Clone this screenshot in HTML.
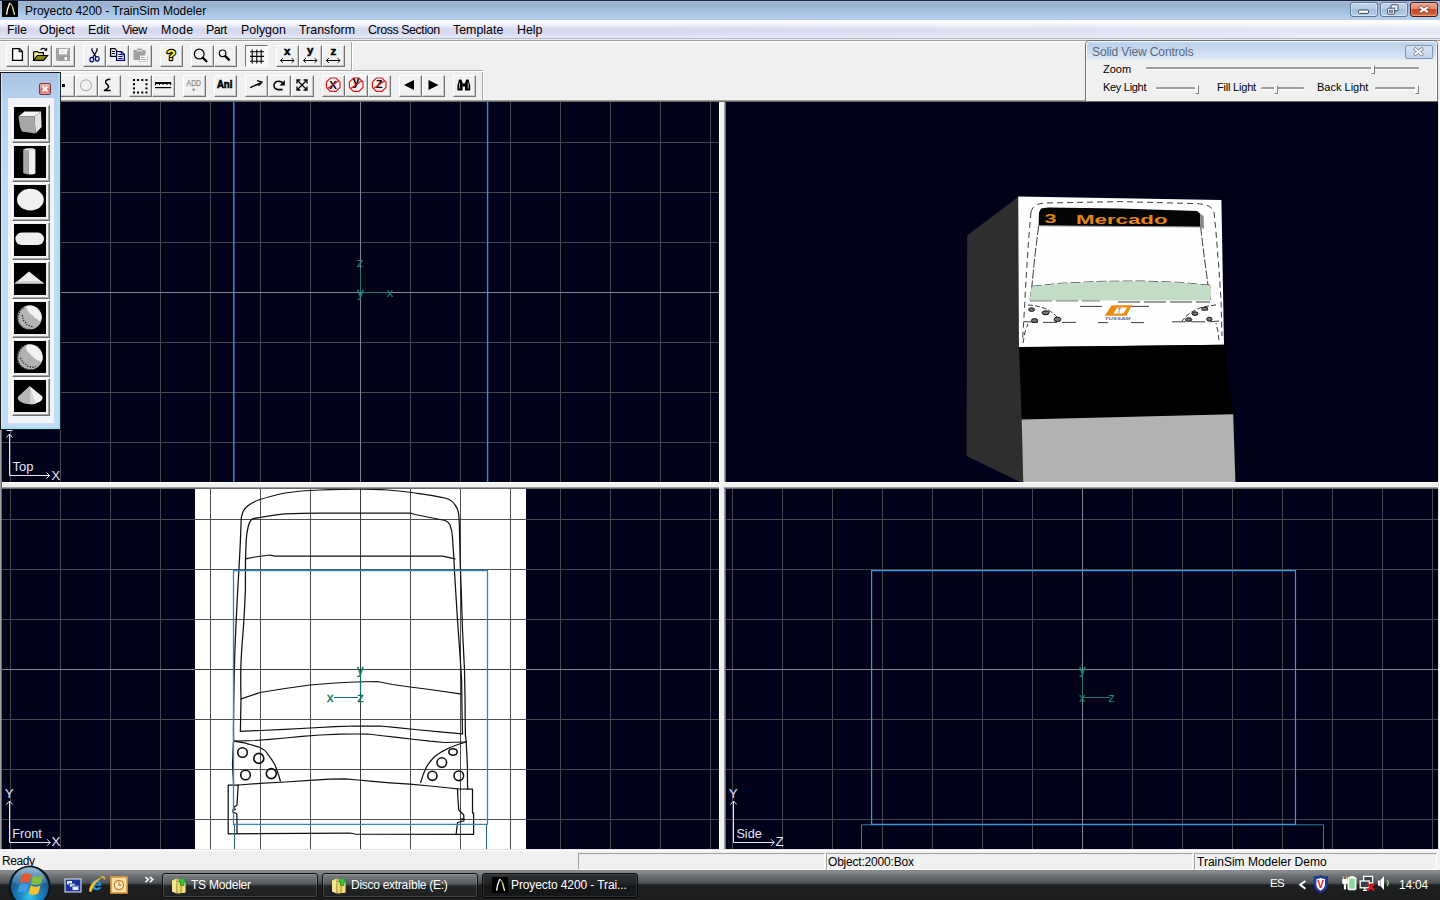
<!DOCTYPE html>
<html lang="es">
<head>
<meta charset="utf-8">
<title>Proyecto 4200 - TrainSim Modeler</title>
<style>
html,body{margin:0;padding:0;}
body{width:1440px;height:900px;overflow:hidden;position:relative;background:#f0f0f0;font-family:"Liberation Sans",sans-serif;font-size:12px;color:#000;}
.abs{position:absolute;}
#title{left:0;top:0;width:1440px;height:20px;background:linear-gradient(#1c2c48 0,#1c2c48 1px,#a9b9d1 1px,#a9b9d1 2px,#9cb2cf 2px,#9cb4d2 6px,#a4c0e0 11px,#b2ceee 17px,#b9cde6 20px);}
#title .txt{left:25px;top:3px;letter-spacing:-0.03px;font-size:12px;line-height:16px;white-space:nowrap;color:#000;}
#menu{left:0;top:20px;width:1440px;height:18px;background:linear-gradient(#ffffff 0,#fbfcff 3px,#e6eaf8 6px,#d5d9ed 9px,#d9dbf2 13px,#e4e8f5 18px);}
#menu span{position:absolute;top:2px;font-size:12.4px;line-height:16px;white-space:nowrap;}
#menuline{left:0;top:38px;width:1440px;height:4px;background:linear-gradient(#b6bac2 0,#b6bac2 1px,#e9edf2 1px,#e9edf2 2px,#9a9ea2 2px,#9a9ea2 3px,#fff 3px,#fff 4px);}
.tb{position:absolute;width:23px;height:22px;box-sizing:border-box;background:#f1f1f1;box-shadow:inset -1px -1px 0 #c9c9c9;border-left:1px solid #fff;border-top:1px solid #fff;border-right:1px solid #737373;border-bottom:1px solid #737373;}
.tb svg{position:absolute;left:-1px;top:-1px;}
.tb.down{box-shadow:none;border-left:1px solid #737373;border-top:1px solid #737373;border-right:1px solid #fff;border-bottom:1px solid #fff;background:#f7f7f7;}
.wbtn{box-sizing:border-box;border:1px solid #5f7896;border-radius:3px;background:linear-gradient(#c3d6ec 0,#b4cbe6 45%,#a3bedd 50%,#b4cdea 100%);box-shadow:inset 0 0 0 1px rgba(255,255,255,.45);}
.lbl{font-size:11px;line-height:13px;white-space:nowrap;color:#000;}
.trk{height:2px;background:#9c9c9c;border-bottom:1px solid #fff;border-radius:1px;}
.thm{width:4px;height:9px;box-sizing:border-box;background:#f4f4f4;border-left:1px solid #fff;border-top:1px solid #fff;border-right:1px solid #808080;border-bottom:1px solid #808080;}
.grid{background-image:linear-gradient(90deg,#46464f 0,#46464f 1px,transparent 1px),linear-gradient(#46464f 0,#46464f 1px,transparent 1px);background-size:50px 50px,50px 50px;background-repeat:repeat;}
svg text{font-family:"Liberation Sans",sans-serif;}
.pane{height:17px;box-sizing:border-box;border-left:1px solid #a0a0a0;border-top:1px solid #a0a0a0;border-right:1px solid #fff;border-bottom:1px solid #fff;}
.pane span{position:absolute;left:2px;top:1px;font-size:12px;line-height:15px;white-space:nowrap;}
.tbtn{height:25px;box-sizing:border-box;border:1px solid #0e0f10;border-radius:3px;background:linear-gradient(#7d8184 0,#6a6e71 5px,#54585a 10px,#3d4042 11px,#222426 12px,#1e2022 25px);box-shadow:inset 0 0 0 1px rgba(255,255,255,.16);}
.tbtn span{position:absolute;top:4px;font-size:12px;line-height:15px;color:#fff;white-space:nowrap;}
.tbtn.act{background:linear-gradient(#2e3032 0,#222426 10px,#141516 12px,#18191a 25px);border-color:#08090a;box-shadow:inset 0 0 0 1px rgba(255,255,255,.10);}
.tray{font-size:11.5px;line-height:14px;color:#fff;white-space:nowrap;}
.pb{position:absolute;left:11px;width:38px;height:38px;box-sizing:border-box;background:#f0f0f0;border-left:1px solid #fff;border-top:1px solid #fff;border-right:1px solid #707070;border-bottom:1px solid #707070;box-shadow:inset -1px -1px 0 #a6a6a6;}
.pb svg{position:absolute;left:1px;top:1px;background:#000;}
.vp{position:absolute;background-color:#010119;overflow:hidden;}
</style>
</head>
<body>
<div id="title" class="abs">
  <div class="abs txt">Proyecto 4200 - TrainSim Modeler</div>
</div>
<div id="menu" class="abs">
  <span style="left:7px">File</span><span style="left:39px">Object</span><span style="left:88px">Edit</span><span style="left:122px;letter-spacing:-0.5px">View</span><span style="left:161px;letter-spacing:0.4px">Mode</span><span style="left:206px;letter-spacing:-0.5px">Part</span><span style="left:241px">Polygon</span><span style="left:299px">Transform</span><span style="left:368px;letter-spacing:-0.42px">Cross Section</span><span style="left:453px">Template</span><span style="left:517px">Help</span>
</div>
<div class="abs" style="left:0;top:20px;width:1440px;height:18px;background:linear-gradient(90deg,rgba(255,255,255,0) 45%,rgba(255,255,255,.4) 100%);"></div>
<div id="menuline" class="abs"></div>

<!-- TOOLBARS -->
<div id="toolbars">
<!-- toolbar frame lines -->
<div class="abs" style="left:0;top:70px;width:483px;height:1px;background:#a8a8a8"></div>
<div class="abs" style="left:0;top:71px;width:484px;height:1px;background:#fff"></div>
<div class="abs" style="left:351px;top:42px;width:1px;height:29px;background:#a8a8a8"></div>
<div class="abs" style="left:352px;top:42px;width:1px;height:29px;background:#fff"></div>
<div class="abs" style="left:482px;top:72px;width:1px;height:28px;background:#a8a8a8"></div>
<div class="abs" style="left:483px;top:72px;width:1px;height:28px;background:#fff"></div>
<!-- ROW 1 -->
<div class="tb" style="left:6px;top:45px"><svg width="23" height="22" viewBox="0 0 23 22"><path d="M6.6 3.6H13.4L16.4 6.6V15.4H6.6Z" fill="#fff" stroke="#000" stroke-width="1.3"/><path d="M13.2 3.8V6.8H16.2" fill="none" stroke="#000" stroke-width="1.1"/></svg></div>
<div class="tb" style="left:29px;top:45px"><svg width="23" height="22" viewBox="0 0 23 22"><path d="M4.6 15.4V7.6L5.6 6.6H8.6L9.6 7.6H14.4V10" fill="#f2f284" stroke="#000" stroke-width="1.2"/><path d="M4.6 15.4L8.4 10.5H18.6L14.6 15.4Z" fill="#8a8a12" stroke="#000" stroke-width="1.2"/><path d="M11.5 4.8C13 2.8 16 2.8 17.4 5.6" fill="none" stroke="#000" stroke-width="1.1"/><path d="M15 5.6H18.2V2.8Z" fill="#000"/></svg></div>
<div class="tb" style="left:52px;top:45px"><svg width="23" height="22" viewBox="0 0 23 22"><path d="M4 3H18V16H5L4 15Z" fill="#a2a2a2"/><rect x="7" y="4" width="8" height="5.4" fill="#f6f6f6"/><path d="M8.4 5.6H12M8.4 7.4H13" stroke="#dadada" stroke-width=".8"/><rect x="14.6" y="3.6" width="1.4" height="2" fill="#fff"/><rect x="6.5" y="11" width="9" height="5" fill="#9a9a9a"/><rect x="12.6" y="12" width="2.4" height="3.2" fill="#fff"/></svg></div>

<div class="tb" style="left:83px;top:45px"><svg width="23" height="22" viewBox="0 0 23 22"><path d="M9 3.2V5.6L13.4 12.5M14 3.2V5.6L9.8 12.5" fill="none" stroke="#000018" stroke-width="1.3"/><ellipse cx="8.8" cy="14.6" rx="1.9" ry="2.3" fill="none" stroke="#00007c" stroke-width="1.2"/><ellipse cx="14.2" cy="13.8" rx="1.9" ry="2.3" fill="none" stroke="#00007c" stroke-width="1.2"/></svg></div>
<div class="tb" style="left:106px;top:45px"><svg width="23" height="22" viewBox="0 0 23 22"><path d="M4.6 3.6H8.8L10.6 5.4V11.4H4.6Z" fill="#fff" stroke="#000" stroke-width="1.3"/><path d="M6 6.5H9M6 8.5H9" stroke="#000" stroke-width="1"/><path d="M10.6 6.6H15.4L18.4 9.6V15.4H10.6Z" fill="#fff" stroke="#00006e" stroke-width="1.3"/><path d="M15.2 6.8V9.8H18.2" fill="none" stroke="#00006e" stroke-width="1"/><path d="M12.4 9.5H15M12.4 11.5H16.6M12.4 13.5H16.6" stroke="#00006e" stroke-width="1"/></svg></div>
<div class="tb" style="left:129px;top:45px"><svg width="23" height="22" viewBox="0 0 23 22"><path d="M4.5 5H8V3.6H13V5H16.5V10H18.5V16.5H10.5V15H4.5Z" fill="#a0a0a0"/><rect x="7.5" y="5.3" width="6" height="1.2" fill="#e8e8e8"/><rect x="11" y="10.6" width="7" height="5.4" fill="#f4f4f4"/><path d="M12 12.5H15.5M12 14.5H17" stroke="#a8a8a8" stroke-width="1"/><rect x="16.3" y="9.6" width="2" height="2" fill="#fff"/></svg></div>

<div class="tb" style="left:160px;top:45px"><svg width="23" height="22" viewBox="0 0 23 22"><text x="11.2" y="15.4" text-anchor="middle" font-family="Liberation Sans,sans-serif" font-weight="bold" font-size="15.5" fill="#f6f62c" stroke="#000" stroke-width="2.3" stroke-linejoin="round" paint-order="stroke">?</text></svg></div>

<div class="tb" style="left:191px;top:45px"><svg width="23" height="22" viewBox="0 0 23 22"><circle cx="8.2" cy="9" r="4.9" fill="none" stroke="#000" stroke-width="1.2"/><path d="M11.6 12.6L16.2 17" stroke="#000" stroke-width="2.2"/></svg></div>
<div class="tb" style="left:214px;top:45px"><svg width="23" height="22" viewBox="0 0 23 22"><circle cx="8.6" cy="8.3" r="3.3" fill="none" stroke="#000" stroke-width="1.2"/><path d="M10.8 10.6L15.6 15.4" stroke="#000" stroke-width="2.2"/></svg></div>

<div class="tb down" style="left:245px;top:45px"><svg width="23" height="22" viewBox="0 0 23 22"><path d="M7.2 4.6V18.4M11.8 4.6V18.4M16.2 4.6V18.4M5 6.8H19M5 11.4H19M5 16.2H19" stroke="#000" stroke-width="1.1" fill="none"/></svg></div>

<div class="tb" style="left:276px;top:45px"><svg width="23" height="22" viewBox="0 0 23 22"><text x="11.3" y="9.6" text-anchor="middle" font-family="Liberation Mono,monospace" font-weight="bold" font-size="11.5" fill="#000" stroke="#000" stroke-width=".5">x</text><path d="M4.5 15.5H18" stroke="#000" stroke-width="1"/><path d="M6.8 13.2L4.5 15.5L6.8 17.8M15.7 13.2L18 15.5L15.7 17.8" fill="none" stroke="#000" stroke-width="1"/></svg></div>
<div class="tb" style="left:299px;top:45px"><svg width="23" height="22" viewBox="0 0 23 22"><text x="11.3" y="9.2" text-anchor="middle" font-family="Liberation Mono,monospace" font-weight="bold" font-size="11.5" fill="#000" stroke="#000" stroke-width=".5">y</text><path d="M4.5 15.5H18" stroke="#000" stroke-width="1"/><path d="M6.8 13.2L4.5 15.5L6.8 17.8M15.7 13.2L18 15.5L15.7 17.8" fill="none" stroke="#000" stroke-width="1"/></svg></div>
<div class="tb" style="left:322px;top:45px"><svg width="23" height="22" viewBox="0 0 23 22"><text x="11.3" y="9.6" text-anchor="middle" font-family="Liberation Mono,monospace" font-weight="bold" font-size="11.5" fill="#000" stroke="#000" stroke-width=".5">z</text><path d="M4.5 15.5H18" stroke="#000" stroke-width="1"/><path d="M6.8 13.2L4.5 15.5L6.8 17.8M15.7 13.2L18 15.5L15.7 17.8" fill="none" stroke="#000" stroke-width="1"/></svg></div>

<!-- ROW 2 -->
<div class="tb" style="left:6px;top:75px"></div>
<div class="tb" style="left:29px;top:75px"></div>
<div class="tb" style="left:52px;top:75px"><svg width="23" height="22" viewBox="0 0 23 22"><rect x="10" y="9" width="3" height="3" fill="#000"/></svg></div>
<div class="tb" style="left:75px;top:75px"><svg width="23" height="22" viewBox="0 0 23 22"><circle cx="11" cy="10.3" r="5.5" fill="none" stroke="#9a9a9a" stroke-width="0.9"/></svg></div>
<div class="tb" style="left:98px;top:75px"><svg width="23" height="22" viewBox="0 0 23 22"><path d="M12.4 4.4C9.6 4 7.2 5.4 7.6 7.4C8 9.2 10.6 9.6 10.6 11.6C10.6 13.2 8.6 14.4 6 15.6H12.6" fill="none" stroke="#000" stroke-width="1.5"/></svg></div>

<div class="tb" style="left:129px;top:75px"><svg width="23" height="22" viewBox="0 0 23 22" fill="#000"><rect x="4" y="4" width="2" height="2"/><rect x="8" y="4" width="2" height="2"/><rect x="12.3" y="4" width="2" height="2"/><rect x="16.5" y="4" width="2" height="2"/><rect x="4" y="8.2" width="2" height="2"/><rect x="16.5" y="8.2" width="2" height="2"/><rect x="4" y="12.4" width="2" height="2"/><rect x="16.5" y="12.4" width="2" height="2"/><rect x="4" y="16.5" width="2" height="2"/><rect x="8" y="16.5" width="2" height="2"/><rect x="12.3" y="16.5" width="2" height="2"/><rect x="16.5" y="16.5" width="2" height="2"/></svg></div>
<div class="tb" style="left:152px;top:75px"><svg width="23" height="22" viewBox="0 0 23 22"><path d="M3 8H19.2" stroke="#000" stroke-width="2"/><path d="M3.5 8V10.4M7.5 8V10M11.2 8V10M15 8V10M18.7 8V10.4" stroke="#000" stroke-width="1"/><path d="M3 12.6H19.2" stroke="#000" stroke-width="1.2"/></svg></div>

<div class="tb" style="left:183px;top:75px"><svg width="23" height="22" viewBox="0 0 23 22"><text x="10.8" y="11" text-anchor="middle" font-family="Liberation Mono,monospace" font-size="8.6" fill="#8e8e8e" stroke="#8e8e8e" stroke-width=".25" textLength="14.4" lengthAdjust="spacingAndGlyphs">ADD</text><rect x="9.6" y="13.6" width="2.2" height="2.2" fill="#909090"/></svg></div>

<div class="tb" style="left:214px;top:75px"><svg width="23" height="22" viewBox="0 0 23 22"><text x="10.6" y="13" text-anchor="middle" font-family="Liberation Sans,sans-serif" font-weight="bold" font-size="10" fill="#000" stroke="#000" stroke-width="0.6" textLength="15.4" lengthAdjust="spacingAndGlyphs">Ani</text></svg></div>

<div class="tb" style="left:245px;top:75px"><svg width="23" height="22" viewBox="0 0 23 22"><path d="M5.2 12.6L15.6 8" stroke="#000" stroke-width="1.5"/><path d="M12 5.6L17 7L13.6 10.8" fill="none" stroke="#000" stroke-width="1.3"/></svg></div>
<div class="tb" style="left:268px;top:75px"><svg width="23" height="22" viewBox="0 0 23 22"><path d="M14.6 14.6H10.2C7.4 14.6 6 12.4 6 10.6C6 8 8 6.2 10.6 6.2C12.6 6.2 14.4 7 15.4 8.8" fill="none" stroke="#000" stroke-width="1.6"/><path d="M16.8 5V10.4H11.6Z" fill="#000"/></svg></div>
<div class="tb" style="left:291px;top:75px"><svg width="23" height="22" viewBox="0 0 23 22"><path d="M6.5 5.5L15.5 14.5M15.5 5.5L6.5 14.5" stroke="#000" stroke-width="1.2"/><path d="M6 8.4V5H9.4M12.6 5H16V8.4M16 11.6V15H12.6M9.4 15H6V11.6" fill="none" stroke="#000" stroke-width="1.3"/></svg></div>

<div class="tb" style="left:322px;top:75px"><svg width="23" height="22" viewBox="0 0 23 22"><text x="11.2" y="13.6" text-anchor="middle" font-family="Liberation Sans,sans-serif" font-weight="bold" font-size="11.5" fill="#000">X</text><path d="M8.4 3H14L18 7V12.4L14 16.4H8.4L4.4 12.4V7Z" fill="none" stroke="#e01a1a" stroke-width="1.15"/><path d="M5.6 13.6L16.8 5.8" stroke="#e01a1a" stroke-width="1.2"/></svg></div>
<div class="tb" style="left:345px;top:75px"><svg width="23" height="22" viewBox="0 0 23 22"><text x="11.2" y="10.4" text-anchor="middle" font-family="Liberation Sans,sans-serif" font-weight="bold" font-size="13" fill="#000">y</text><path d="M8.4 3H14L18 7V12.4L14 16.4H8.4L4.4 12.4V7Z" fill="none" stroke="#e01a1a" stroke-width="1.15"/><path d="M5.6 13.6L16.8 5.8" stroke="#e01a1a" stroke-width="1.2"/></svg></div>
<div class="tb" style="left:368px;top:75px"><svg width="23" height="22" viewBox="0 0 23 22"><text x="11.2" y="13.4" text-anchor="middle" font-family="Liberation Sans,sans-serif" font-weight="bold" font-size="11" fill="#000">Z</text><path d="M8.4 3H14L18 7V12.4L14 16.4H8.4L4.4 12.4V7Z" fill="none" stroke="#e01a1a" stroke-width="1.15"/><path d="M5.6 13.6L16.8 5.8" stroke="#e01a1a" stroke-width="1.2"/></svg></div>

<div class="tb" style="left:399px;top:75px"><svg width="23" height="22" viewBox="0 0 23 22"><path d="M5 10L15 5V15Z" fill="#000"/></svg></div>
<div class="tb" style="left:422px;top:75px"><svg width="23" height="22" viewBox="0 0 23 22"><path d="M16.5 10L6.5 5V15Z" fill="#000"/></svg></div>
<div class="tb" style="left:453px;top:75px"><svg width="23" height="22" viewBox="0 0 23 22"><path d="M6 4.4H8.4L9.6 8V15.6H4.4V10.6ZM15.6 4.4H13.2L12 8V15.6H17.2V10.6Z" fill="#000"/><rect x="9.4" y="8.4" width="2.8" height="3.2" fill="#000"/><path d="M6.4 7.6V13.6M15.2 7.6V13.6" stroke="#fff" stroke-width="0.7"/></svg></div>
</div>


<!-- VIEWPORTS -->
<!-- sunken frame lines around view area -->
<div class="abs" style="left:0;top:100px;width:1440px;height:2px;background:linear-gradient(#a0a0a0 0,#a0a0a0 1px,#696969 1px,#696969 2px);"></div>
<div class="abs" style="left:0;top:100px;width:2px;height:750px;background:linear-gradient(90deg,#a0a0a0 0,#a0a0a0 1px,#696969 1px,#696969 2px);"></div>
<div class="abs" style="left:1438px;top:100px;width:2px;height:751px;background:linear-gradient(90deg,#e3e3e3 0,#e3e3e3 1px,#fff 1px,#fff 2px);"></div>
<div class="abs" style="left:0;top:849px;width:1440px;height:2px;background:linear-gradient(#e3e3e3 0,#e3e3e3 1px,#fff 1px,#fff 2px);"></div>
<!-- splitters -->
<div class="abs" style="left:719px;top:102px;width:7px;height:747px;background:linear-gradient(90deg,#fff 0,#fff 1px,#f0f0f0 1px,#f0f0f0 5px,#a0a0a0 5px,#a0a0a0 6px,#696969 6px);"></div>
<div class="abs" style="left:2px;top:482px;width:1436px;height:7px;background:linear-gradient(#fff 0,#fff 1px,#f0f0f0 1px,#f0f0f0 5px,#a0a0a0 5px,#a0a0a0 6px,#696969 6px);"></div>
<div class="abs" style="left:720px;top:483px;width:4px;height:6px;background:#f0f0f0;"></div><div class="abs" style="left:719px;top:483px;width:1px;height:6px;background:#fff;"></div>

<!-- TOP-LEFT (Top view) -->
<div id="vpTL" class="vp grid" style="left:2px;top:102px;width:717px;height:380px;background-position:8px 40px,8px 40px;">
<svg width="717" height="380" viewBox="2 102 717 380" style="position:absolute;left:0;top:0">
  <path d="M2 292.5H719M360.5 102V482" stroke="#85858f" stroke-width="1" fill="none"/>
  <path d="M233.8 102V482M487.6 102V482" stroke="#3590dc" stroke-width="1.4" fill="none"/>
  <g stroke="#1c7767" stroke-width="1" fill="none"><path d="M360.5 268V292M361 292.5H388"/></g>
  <g fill="#1f8572" font-size="13" text-anchor="middle" style="font-family:'Liberation Sans',sans-serif"><text x="360" y="267.2">z</text><text x="390" y="297.2">x</text><text x="360.4" y="296.6" stroke="#1f8572" stroke-width=".3">y</text></g>
  <g stroke="#e4e4fa" stroke-width="1" fill="none"><path d="M6.5 430.5H12.5"/><path d="M9.5 434V475.5H49.5"/><path d="M6.5 437.5L9.5 434L12.5 437.5M46.5 472.5L49.5 475.5L46.5 478.5"/></g>
  <text x="12.5" y="471" font-size="13" fill="#e4e4fa">Top</text>
  <text x="51.5" y="479.5" font-size="13" fill="#e4e4fa">X</text>
</svg>
</div>

<!-- TOP-RIGHT (3D view) -->
<div id="vpTR" class="vp" style="left:726px;top:102px;width:712px;height:380px;">
<svg width="712" height="380" viewBox="726 102 712 380" style="position:absolute;left:0;top:0">
  <path d="M967.2 235.5L1018.4 196.6L1023.2 482H1020L966.6 456Z" fill="#2e2e2e"/>
  <path d="M1018.2 196.5L1221.4 200L1224 344.8L1019 347.2Z" fill="#fefefe"/>
  <path d="M1019 347L1224 344.7L1233.2 414.2L1021.7 419.4Z" fill="#000"/>
  <path d="M1021.7 419.4L1233.2 414.2L1235.4 482H1023.2Z" fill="#b2b2b2"/>
  <!-- bus front texture -->
  <g fill="none" stroke="#1a1a1a" stroke-width="0.85" stroke-dasharray="6 4">
    <path d="M1031 212C1033 205 1038 203.4 1046 203L1120 201.6L1196 203.6C1206 204 1212 206 1214 212L1216 232L1219 270L1221 300L1222 336"/>
    <path d="M1031 212L1028.6 240L1026 280L1024.4 310L1022.6 340"/>
    <path d="M1038.6 226L1035 255L1032 285L1030 300" stroke-dasharray="9 2"/>
    <path d="M1200.6 226.6L1204 255L1208 285L1210.6 300" stroke-dasharray="9 2"/>
    <path d="M1031.6 286.4L1060 283.4L1100 281.4L1140 281L1180 282.4L1211 285.4" stroke-dasharray="10 3"/>
    <path d="M1030 300.8H1100M1118 302H1210" stroke-dasharray="22 4"/>
    <path d="M1080 306.4H1102M1126 306.4H1149M1098 322.6H1108M1131 322.6H1144" stroke-dasharray="none"/>
    <path d="M1024 321.6L1040 322.4H1076M1172 321.8H1210L1219 321" stroke-dasharray="14 5"/>
    <path d="M1028 305C1040 305.6 1052 309 1060 321M1216 305C1202 306 1190 310 1182 321" stroke-dasharray="5 2"/>
    <path d="M1023 343L1025 332L1028 324M1219 340L1217.6 330L1216 323" stroke-dasharray="5 3"/>
  </g>
  <path d="M1041 208.6L1048 207.6L1120 208.4L1197 211L1200 213.4L1200.6 227L1038.6 225.8L1039 212.6Z" fill="#050505"/>
  <path d="M1200 213.4L1203.6 216L1204 228.4L1200.6 227Z" fill="#8a8a8a"/>
  <path d="M1038.6 225.8L1200.6 227L1204 228.4" stroke="#9a9a9a" stroke-width="1" fill="none"/>
  <text x="1044.4" y="222.6" font-size="12.6" font-weight="bold" fill="#e2861c" textLength="12" lengthAdjust="spacingAndGlyphs">3</text>
  <text x="1076" y="224.4" font-size="13.4" font-weight="bold" fill="#e2861c" textLength="91.6" lengthAdjust="spacingAndGlyphs">Mercado</text>
  <path d="M1031.6 286.6L1060 283.6L1100 281.6L1140 281.2L1180 282.6L1211.4 285.6L1210.4 300.4H1029.6Z" fill="#c3dcc6"/>
  <!-- logo -->
  <path d="M1111.6 305.2H1132L1126.2 315.8H1104.8ZM1117.2 307.4L1113.4 313.6H1123.4L1127.2 307.4Z" fill="#ee8a10" fill-rule="evenodd"/>
  <text x="1117" y="312.8" font-size="6.6" font-style="italic" fill="#5a5a8a">T</text>
  <text x="1104.8" y="320.2" font-size="4.4" font-style="italic" font-weight="bold" fill="#6a6488" textLength="25.6" lengthAdjust="spacingAndGlyphs">TUSSAM</text>
  <!-- headlights -->
  <g fill="#777" stroke="#111" stroke-width="1"><ellipse cx="1031.6" cy="309.6" rx="3" ry="1.8"/><ellipse cx="1045.6" cy="312.8" rx="3.6" ry="2"/><ellipse cx="1034.6" cy="320.6" rx="3.2" ry="2"/><ellipse cx="1057.4" cy="319.4" rx="3.4" ry="2.2"/><ellipse cx="1195" cy="313.6" rx="3" ry="1.8"/><ellipse cx="1188.6" cy="319.6" rx="3.2" ry="1.8"/><ellipse cx="1209.4" cy="319.2" rx="2.6" ry="2"/><rect x="1202" y="307.6" width="5.4" height="2.6" stroke-width=".8"/></g>
</svg>
</div>

<!-- BOTTOM-LEFT (Front view) -->
<div id="vpBL" class="vp grid" style="left:2px;top:489px;width:717px;height:360px;background-position:8px 30px,8px 30px;">
<svg width="717" height="360" viewBox="2 489 717 360" style="position:absolute;left:0;top:0">
  <rect x="195" y="489" width="331" height="360" fill="#fff"/>
  <path d="M2 669.5H195M526 669.5H719" stroke="#85858f" stroke-width="1" fill="none"/>
  <g id="blgrid" stroke="#4e4e4e" stroke-width="1" fill="none"><path d="M210.5 489V849M260.5 489V849M310.5 489V849M410.5 489V849M460.5 489V849M510.5 489V849M195 519.5H526M195 569.5H526M195 619.5H526M195 719.5H526M195 769.5H526M195 819.5H526"/><path d="M360.5 489V849M195 669.5H526" stroke="#3c3c3c"/></g>
  <g id="bus" stroke="#101010" stroke-width="1.25" fill="none" stroke-linejoin="round" stroke-linecap="round">
    <!-- outer roof + sides -->
    <path d="M233.6 742C233.4 730 233.6 700 234.6 660C235.2 640 236.4 615 238 585C239.2 565 240.4 545 240.8 530L241.2 520C241.4 514 244 509 247.5 506C251 503 255 501.4 260 499.5C268 497 276 495 285 493C297 491.2 308 490.4 320 490C333 489.4 347 489 360 489C370 489 379 489.4 387.5 490C397 490.8 406 491.6 415 493C426 494.6 436 496 445 498C450 499.4 453.4 501.6 455 505C457.6 508.4 458.6 511.6 458.8 515C459.2 520 459.4 525 459.5 530L460 555C460.3 567 460.8 578 461.2 590L462.5 630L464.5 670L465 697L465.4 735L466.2 742"/>
    <!-- inner windshield frame -->
    <path d="M240.4 731.5L241 698.5C240.8 690 240.6 680 240.8 670C241 655 242.4 640 243.6 625C244.4 612 245 600 245.4 590L245.5 558.8L246.2 540C246.6 535 247.2 531 248 527.5C249 523 250.4 520.4 252.5 518.8C262 516.8 273 515.2 285 513.8C297 513.2 308 513 320 513H410L415 514.5L445 520.5C447.6 521.4 449.2 523 450 525C451.6 529 452.2 533 452.5 537.5L453.8 557.5C454.2 565 454.6 572 455 580L457.5 620L460 655L461.6 680L462 710L462.5 733.8"/>
    <!-- dest sign bottom line -->
    <path d="M245.5 558.8L255 557L270 555L275 556.2H442.5L455 558.8"/>
    <!-- wiper arc -->
    <path d="M241.2 698.8L260 692.5L285 688.5L310 685L335 683L355 682L377.5 681.5L392.5 684.5L410 687L430 689.5L460 693.8"/>
    <!-- windshield bottom -->
    <path d="M240.4 731.4L260 730.5L285 729.4L310 728L335 726.6L355 726H380L397 727.6L415 729.5L440 731.8L462.5 733.8"/>
    <!-- below windshield -->
    <path d="M233.8 741.2L255 740.5L270 739.4L285 738L302 736.4L320 735L340 734.2L355 734H368L380 735.5L397 737.4L415 739.5L430 741.2L445 742.5L466 742"/>
    <!-- headlight cluster curves -->
    <path d="M233.8 741.2C240 742.2 244 742.8 247.5 743.8C252 745 256.4 746 260 747.5C263.4 749 265.8 751 267.5 753.8C270.4 757.4 273 761 275 765C277 770 278.6 775 280.4 781"/>
    <path d="M466.2 742L458 744.5L450 747.5L442 751.6L435 756.2C431.4 759.6 428.6 763.4 426.2 767.5C424 772 422.2 777 420.6 782.5"/>
    <g stroke-width="1.6"><circle cx="242.5" cy="752.5" r="4.8"/><circle cx="258.8" cy="758.4" r="5"/><circle cx="245.5" cy="775" r="4.8"/><circle cx="271.3" cy="773.6" r="5"/>
    <ellipse cx="453" cy="752" rx="4.2" ry="3.2"/><circle cx="441.8" cy="762.6" r="4.8"/><circle cx="432.4" cy="775.8" r="4.6"/><circle cx="458.8" cy="775.8" r="4.8"/></g>
    <!-- sides down to bumper -->
    <path d="M233.4 742L232.5 765L233.6 784"/>
    <path d="M466.2 742L467.4 765L467.5 785L467.8 789"/>
    <!-- bumper -->
    <path d="M228.5 785H238.5L260 783.4L285 782L310 780.4L330 779.2L345 778.8L358 780L370 781.2L390 782.8L410 784.2L430 786L445 787.5L457.5 788.8L472.5 789.2V813H473.6V834.4L355 834L350 833L228.2 833.8V785"/>
    <path d="M238.2 785L237.6 795L237 805L233.8 807.5L232.8 812L236.8 813.8L237 822V833.6"/>
    <path d="M457.5 788.8L458 800L458.8 810L463.8 815V821L457.5 822.5L456.2 833.8"/>
    <path d="M461 819.5L463.6 818.8" stroke-width="1.8"/><path d="M233.6 809.6L235.2 809.4" stroke-width="1.6"/>
  </g>
  <!-- selection boxes -->
  <path d="M233.5 570.5H487.5V824.4H233.5Z" stroke="#3585bd" stroke-width="1.3" fill="none"/>
  <path d="M234.5 825V849M486.5 825V849" stroke="#2a6272" stroke-width="1.1" fill="none"/>
  <!-- gizmo -->
  <g stroke="#0e7264" stroke-width="1.2" fill="none"><path d="M360.5 675V696M334 697.5H358"/></g>
  <g fill="#0e7264" stroke="#0e7264" stroke-width=".35" font-size="13" text-anchor="middle" style="font-family:'Liberation Sans',sans-serif"><text x="360.4" y="702">z</text><text x="330.2" y="702.2">x</text><text x="360.2" y="673.6">y</text></g>
  <!-- corner label -->
  <g stroke="#e4e4fa" stroke-width="1" fill="none"><path d="M9.5 801V842.5H50"/><path d="M6.4 804.6L9.5 801L12.8 804.6M47 839.2L50.2 842.5L47 845.8"/></g>
  <text x="4.8" y="797.6" font-size="13.4" fill="#e4e4fa">Y</text>
  <text x="12.2" y="837.6" font-size="13" fill="#e4e4fa" textLength="29.6" lengthAdjust="spacingAndGlyphs">Front</text>
  <text x="51.6" y="846" font-size="13.4" fill="#e4e4fa">X</text>
</svg>
</div>

<!-- BOTTOM-RIGHT (Side view) -->
<div id="vpBR" class="vp grid" style="left:726px;top:489px;width:712px;height:360px;background-position:6px 30px,6px 30px;">
<svg width="712" height="360" viewBox="726 489 712 360" style="position:absolute;left:0;top:0">
  <path d="M726 669.5H1438M1082.5 489V849" stroke="#85858f" stroke-width="1" fill="none"/>
  <path d="M861.5 849V824.8H1323.5V849" stroke="#2f7da2" stroke-width="1" fill="none"/>
  <path d="M871.6 570.6H1295.5V824.3H871.6Z" stroke="#3e95de" stroke-width="1.2" fill="none"/>
  <g stroke="#1c7767" stroke-width="1" fill="none"><path d="M1082.5 675V697M1083 697.5H1110"/></g>
  <g fill="#1f8572" font-size="13" text-anchor="middle" style="font-family:'Liberation Sans',sans-serif"><text x="1111.4" y="702">z</text><text x="1082.2" y="702.2">x</text><text x="1082.4" y="673.6" stroke="#1f8572" stroke-width=".3">y</text></g>
  <g stroke="#e4e4fa" stroke-width="1" fill="none"><path d="M733.5 801V842.5H774"/><path d="M730.4 804.6L733.5 801L736.8 804.6M771 839.2L774.2 842.5L771 845.8"/></g>
  <text x="728.8" y="797.6" font-size="13.4" fill="#e4e4fa">Y</text>
  <text x="736.4" y="837.6" font-size="13" fill="#e4e4fa" textLength="25.4" lengthAdjust="spacingAndGlyphs">Side</text>
  <text x="775.6" y="846" font-size="13.4" fill="#e4e4fa">Z</text>
</svg>
</div>

<!-- title icon + buttons -->
<div class="abs" style="left:2px;top:1px;width:16px;height:16px;background:#000;"><svg width="16" height="16" viewBox="0 0 16 16" style="position:absolute;left:0;top:0"><path d="M4.6 13.6L5.6 8L7.6 2.6L8.4 2.4" fill="none" stroke="#fff" stroke-width="1.3"/><path d="M8.4 2.6L10.2 5" fill="none" stroke="#fff" stroke-width="1"/><path d="M10.4 5.4L12.2 12.6" fill="none" stroke="#d8e060" stroke-width="1.5"/><path d="M12.4 12V14" stroke="#fff" stroke-width="1"/></svg></div>
<div class="abs wbtn" style="left:1350px;top:2px;width:28px;height:15px;"><svg width="28" height="15" viewBox="0 0 28 15" style="position:absolute;left:-1px;top:-1px"><rect x="8.5" y="8" width="10" height="3.4" rx="1" fill="#fff" stroke="#3a4656" stroke-width="1"/></svg></div>
<div class="abs wbtn" style="left:1380px;top:2px;width:28px;height:15px;"><svg width="28" height="15" viewBox="0 0 28 15" style="position:absolute;left:-1px;top:-1px"><rect x="11" y="2.8" width="7" height="6" rx="1" fill="#fff" stroke="#3a4656" stroke-width="1"/><rect x="12.6" y="4.6" width="3.6" height="2.4" fill="#b8cce4"/><rect x="7.6" y="6.2" width="7" height="6" rx="1" fill="#fff" stroke="#3a4656" stroke-width="1"/><rect x="9.4" y="8.2" width="3.4" height="2.2" fill="#8aa0bc" stroke="#3a4656" stroke-width="0.6"/></svg></div>
<div class="abs" style="left:1410px;top:2px;width:28px;height:15px;box-sizing:border-box;border:1px solid #3c1c20;border-radius:3px;background:linear-gradient(#e9a18c 0,#e0876c 45%,#c9482a 50%,#d05a32 80%,#e08058 100%);box-shadow:inset 0 0 0 1px rgba(255,220,200,.35);"><svg width="28" height="15" viewBox="0 0 28 15" style="position:absolute;left:-1px;top:-1px"><path d="M10.8 5.6L17.2 9.6M17.2 5.6L10.8 9.6" stroke="#5a3434" stroke-width="3.4" stroke-linecap="square" opacity=".75"/><path d="M10.8 5.6L17.2 9.6M17.2 5.6L10.8 9.6" stroke="#fff" stroke-width="2" stroke-linecap="square"/></svg></div>

<!-- Solid View Controls panel -->
<div id="svc" class="abs" style="left:1085px;top:40px;width:353px;height:61px;box-sizing:border-box;border:1px solid #6a7078;border-bottom:none;border-radius:5px 5px 0 0;background:#f0f0f0;overflow:hidden;">
  <div class="abs" style="left:0;top:0;width:351px;height:19px;background:linear-gradient(#c3d6ec 0,#bed3eb 5px,#cfdff2 12px,#e0eafa 19px);"></div>
  <div class="abs" style="left:0;top:0;width:351px;height:60px;box-sizing:border-box;border:1px solid rgba(255,255,255,.8);border-bottom:none;border-radius:4px 4px 0 0;"></div>
  <div class="abs" style="left:6px;top:3px;font-size:12px;line-height:16px;color:#56687e;white-space:nowrap;letter-spacing:-0.12px">Solid View Controls</div>
  <div class="abs" style="left:319px;top:4px;width:28px;height:14px;box-sizing:border-box;border:1px solid #8596b0;border-radius:2px;background:linear-gradient(#d4e2f3,#c2d4ea);"><svg width="28" height="14" viewBox="0 0 28 14" style="position:absolute;left:-1px;top:-1px"><path d="M10.4 4.2L16.6 9.2M16.6 4.2L10.4 9.2" stroke="#727c8e" stroke-width="3.4" stroke-linecap="square"/><path d="M10.4 4.2L16.6 9.2M16.6 4.2L10.4 9.2" stroke="#fff" stroke-width="2" stroke-linecap="square"/></svg></div>
  <div class="abs lbl" style="left:17px;top:22px;">Zoom</div>
  <div class="abs lbl" style="left:17px;top:40px;letter-spacing:-0.3px">Key Light</div>
  <div class="abs lbl" style="left:131px;top:40px;letter-spacing:-0.2px">Fill Light</div>
  <div class="abs lbl" style="left:231px;top:40px;">Back Light</div>
  <div class="abs trk" style="left:60px;top:26px;width:273px;"></div>
  <div class="abs trk" style="left:70px;top:46px;width:39px;"></div>
  <div class="abs trk" style="left:175px;top:46px;width:43px;"></div>
  <div class="abs trk" style="left:289px;top:46px;width:44px;"></div>
  <div class="abs thm" style="left:285px;top:24px;"></div>
  <div class="abs thm" style="left:109px;top:44px;"></div>
  <div class="abs thm" style="left:188px;top:44px;"></div>
  <div class="abs thm" style="left:329px;top:44px;"></div>
</div>

<!-- Palette -->
<div id="pal" class="abs" style="left:0;top:72px;width:61px;height:358px;box-sizing:border-box;border:1px solid #1a1a22;border-right-color:#202830;background:linear-gradient(#a9c3e2 0,#b9d2ee 30px,#c2daf3 120px,#c4ddf4 100%);">
  <div class="abs" style="left:57px;top:0;width:2px;height:356px;background:linear-gradient(90deg,#b0dcf0,#9fe0f0);"></div>
  <div class="abs" style="left:0;top:354px;width:59px;height:2px;background:#a6dcee;"></div>
  <div class="abs" style="left:0;top:0;width:1px;height:356px;background:#d8e8f8;"></div>
  <div class="abs" style="left:38px;top:10px;width:12px;height:12px;box-sizing:border-box;border:1px solid #6e3c3c;border-radius:2px;background:linear-gradient(#ecb8b0,#dc8c84 50%,#d0706a 55%,#e09890);"><svg width="12" height="12" viewBox="0 0 12 12" style="position:absolute;left:-1px;top:-1px"><path d="M3.6 3.6L8.4 8.4M8.4 3.6L3.6 8.4" stroke="#fff" stroke-width="1.8"/></svg></div>
  <div class="abs" style="left:7px;top:25px;width:46px;height:325px;background:#f1f3fb;"></div>
  <div class="pb" style="top:32px"><svg width="32" height="32" viewBox="0 0 32 32"><path d="M4.5 9.5L10.5 4.5H27L20.5 9.2Z" fill="#f4f4f4"/><path d="M20.5 9.2L27 4.5L27.6 20L21.6 26.6Z" fill="#e2e2e2"/><path d="M4.5 9.5L20.5 9.2L21.6 26.6L8 24.6L6 20Z" fill="#a8a8a8"/></svg></div>
  <div class="pb" style="top:71px"><svg width="32" height="32" viewBox="0 0 32 32"><path d="M9.2 3.6C11 2.4 13.4 2.4 14.8 3.2V28.2C13 28.6 10.8 28 9.2 26.8Z" fill="#a6a6a6"/><path d="M14.8 3.2C16.6 2.2 19.6 2.4 21.4 3.4V27.4C19.4 28.6 16.6 28.8 14.8 28.2Z" fill="#f0f0f0"/><path d="M9.6 3.4C12 2 18.6 1.8 21.2 3.4C18.4 4.6 12.4 4.6 9.6 3.4Z" fill="#dcdcdc"/></svg></div>
  <div class="pb" style="top:110px"><svg width="32" height="32" viewBox="0 0 32 32"><ellipse cx="16.4" cy="14.6" rx="13.4" ry="10.8" fill="#f0f0f0"/></svg></div>
  <div class="pb" style="top:149px"><svg width="32" height="32" viewBox="0 0 32 32"><rect x="1.4" y="8.6" width="28.6" height="12.4" rx="6.2" ry="6.2" fill="#eeeeee"/></svg></div>
  <div class="pb" style="top:188px"><svg width="32" height="32" viewBox="0 0 32 32"><path d="M15 8.4L30 20.4H0.6Z" fill="#ececec"/><path d="M0.6 20.4L3.4 18.2H27.2L30 20.4Z" fill="#cfcfcf"/></svg></div>
  <div class="pb" style="top:227px"><svg width="32" height="32" viewBox="0 0 32 32"><circle cx="15.6" cy="15.4" r="12.2" fill="#b4b4b4"/><path d="M12 4.2C18 1.6 26.6 6.4 27.6 14.4C27.8 18 26 20.4 24.4 18.4C23.6 16.2 22 17 20.6 15.4C19.6 13.4 17.4 13 16 11.4C14.2 9.6 12.4 8 12 4.2Z" fill="#f2f2f2"/><path d="M9.4 5.6C5 8.6 2.6 14.6 4.6 20.2C6.6 25.4 12 28.2 17 27.4" fill="none" stroke="#242424" stroke-width="1.4" stroke-dasharray="1.6 1.1"/><path d="M8 13C9.4 15.4 8.2 18 10.6 19.6C12.6 21 12.4 23.4 15 23.6C16.6 23.8 17.6 25.4 19.4 24.2" fill="none" stroke="#2e2e2e" stroke-width="1.3" stroke-dasharray="1.4 1.2"/></svg></div>
  <div class="pb" style="top:266px"><svg width="32" height="32" viewBox="0 0 32 32"><circle cx="16" cy="16" r="12.8" fill="#b2b2b2"/><path d="M12.6 4C20 2 28.2 8 28.6 16.4C28.6 20 26.4 22 25 19.6C22.6 19.4 21.4 17.4 19.6 16.4C17.4 15.4 16.6 13 14.6 11.6C12.4 10 11.4 7 12.6 4Z" fill="#f2f2f2"/><path d="M9.6 5.2C5 8.6 2.4 15 4.4 20.8C6.4 26.4 12.4 29.4 17.6 28.6" fill="none" stroke="#242424" stroke-width="1.4" stroke-dasharray="1.6 1.1"/><path d="M6.4 17C8 19 8.4 21.6 10.8 22.6C12.8 23.6 13.4 25.8 16 25.8C18 25.8 19.6 27 21.6 25.4" fill="none" stroke="#2e2e2e" stroke-width="1.3" stroke-dasharray="1.4 1.2"/></svg></div>
  <div class="pb" style="top:305px"><svg width="32" height="32" viewBox="0 0 32 32"><path d="M15.6 6L3.8 17C3 20.6 8 24 16.4 24.2Z" fill="#b6b6b6"/><path d="M15.6 6L28.4 16.6C29.6 20.4 24.6 24 16.4 24.2Z" fill="#f2f2f2"/><path d="M15.6 6L22 23.4C20.4 24 18.4 24.2 16.4 24.2Z" fill="#d4d4d4"/></svg></div>
</div>

<!-- STATUS -->
<div id="status" class="abs" style="left:0;top:851px;width:1440px;height:19px;background:#f0f0f0;overflow:hidden;">
  <div class="abs" style="left:2px;top:3px;font-size:12px;letter-spacing:-0.45px;line-height:15px;white-space:nowrap;">Ready</div>
  <div class="abs pane" style="left:578px;top:2px;width:247px;"></div>
  <div class="abs pane" style="left:826px;top:2px;width:367px;"><span style="left:1px;letter-spacing:-0.2px">Object:2000:Box</span></div>
  <div class="abs pane" style="left:1194px;top:2px;width:243px;"><span>TrainSim Modeler Demo</span></div>
</div>
<!-- TASKBAR -->
<div id="taskbar" class="abs" style="left:0;top:870px;width:1440px;height:30px;background:linear-gradient(#7c8083 0,#8a8e90 1px,#6c7073 6px,#4e5254 13px,#3a3d3f 14px,#1d1f21 15px,#1a1c1e 30px);">
  <div class="abs tbtn" style="left:162px;top:3px;width:156px;"><svg width="16" height="19" viewBox="0 0 16 19" style="position:absolute;left:8px;top:2px"><path d="M1 4.4L5.6 2.4V17.4L1 15.4Z" fill="#f6e58a"/><path d="M5.6 2.4L9 3.4V17L5.6 17.4Z" fill="#d9bc4c"/><path d="M6.4 6.4H14.4V16.4L7 17.6Z" fill="#eed56a"/><path d="M9.4 7L11 6.4V17L9.4 17.2Z" fill="#c9a83c"/><path d="M11 6.6H14.4V16.4L11 16.9Z" fill="#f3df80"/><path d="M7.4 6L11.4 1.4L15.2 6H13V9.4H9.6V6Z" fill="#3cc43c" stroke="#1e8a26" stroke-width=".7"/></svg><span style="left:28px;letter-spacing:-0.22px">TS Modeler</span></div>
  <div class="abs tbtn" style="left:322px;top:3px;width:156px;"><svg width="16" height="19" viewBox="0 0 16 19" style="position:absolute;left:8px;top:2px"><path d="M1 4.4L5.6 2.4V17.4L1 15.4Z" fill="#f6e58a"/><path d="M5.6 2.4L9 3.4V17L5.6 17.4Z" fill="#d9bc4c"/><path d="M6.4 6.4H14.4V16.4L7 17.6Z" fill="#eed56a"/><path d="M9.4 7L11 6.4V17L9.4 17.2Z" fill="#c9a83c"/><path d="M11 6.6H14.4V16.4L11 16.9Z" fill="#f3df80"/><path d="M7.4 6L11.4 1.4L15.2 6H13V9.4H9.6V6Z" fill="#3cc43c" stroke="#1e8a26" stroke-width=".7"/></svg><span style="left:28px;letter-spacing:-0.28px">Disco extraíble (E:)</span></div>
  <div class="abs tbtn act" style="left:482px;top:3px;width:156px;"><svg width="16" height="16" viewBox="0 0 16 16" style="position:absolute;left:9px;top:3px;background:#000"><path d="M4.6 13.6L5.6 8L7.6 2.6L8.4 2.4" fill="none" stroke="#fff" stroke-width="1.3"/><path d="M8.4 2.6L10.2 5" fill="none" stroke="#fff" stroke-width="1"/><path d="M10.4 5.4L12.2 12.6" fill="none" stroke="#d8e060" stroke-width="1.5"/><path d="M12.4 12V14" stroke="#fff" stroke-width="1"/></svg><span style="left:28px;letter-spacing:-0.1px">Proyecto 4200 - Trai...</span></div>
  <!-- start orb -->
  <svg class="abs" style="left:5px;top:-6px;overflow:visible" width="50" height="36" viewBox="5 864 50 36">
    <defs>
      <radialGradient id="orbg" cx="0.5" cy="0.78" r="0.75"><stop offset="0" stop-color="#35c6f2"/><stop offset="0.35" stop-color="#1a86c4"/><stop offset="0.7" stop-color="#1f5f96"/><stop offset="1" stop-color="#2a5a84"/></radialGradient>
      <linearGradient id="orbh" x1="0" y1="0" x2="0" y2="1"><stop offset="0" stop-color="#b8d4e8" stop-opacity=".85"/><stop offset="1" stop-color="#6fa2c8" stop-opacity=".25"/></linearGradient>
    </defs>
    <circle cx="29.8" cy="886.6" r="21" fill="#0b1822"/>
    <circle cx="29.8" cy="886.6" r="18.8" fill="url(#orbg)"/>
    <path d="M12.2 882A17.4 17.4 0 0 1 46.6 882C38 886.6 20 886.6 12.2 882Z" fill="url(#orbh)"/>
    <g transform="translate(30.2 884.2) scale(1.16) translate(-28.5 -885.6)"><path d="M21.2 877.6C24 876 27 876.2 29.4 877.6L27.6 884.6C25.2 883.2 22.2 883.2 19.6 884.6Z" fill="#e8582a"/>
    <path d="M31 878.2C33.6 879.6 36.4 879.4 39.6 877.8L37.8 884.8C35 886.4 31.8 886.6 29.2 885.2Z" fill="#86bf3c"/>
    <path d="M19.2 886.2C21.8 884.8 24.8 884.8 27.2 886.2L25.4 893.2C23 891.8 20 891.8 17.4 893.2Z" fill="#3f9be4"/>
    <path d="M28.8 886.8C31.4 888.2 34.4 888.2 37.4 886.4L35.6 893.4C32.8 895.2 29.6 895.2 27 893.8Z" fill="#f6c130"/></g>
  </svg>
  <!-- quick launch -->
  <svg class="abs" style="left:64px;top:8px" width="18" height="15" viewBox="0 0 18 15"><rect x="1" y="1" width="16" height="13" fill="#1a3596" stroke="#e8eefc" stroke-width="1"/><rect x="3" y="3" width="5" height="3.4" fill="#dfe8fa"/><rect x="5.6" y="5.4" width="5.4" height="3.6" fill="#c4d2f0" stroke="#1a3596" stroke-width=".5"/><rect x="8.2" y="7.8" width="6.6" height="4.4" fill="#eef2fc" stroke="#1a3596" stroke-width=".5"/><rect x="8.2" y="7.8" width="6.6" height="1.3" fill="#7d95d6"/></svg>
  <svg class="abs" style="left:87px;top:5px" width="20" height="19" viewBox="0 0 20 19"><text x="9.6" y="15.2" text-anchor="middle" font-family="Liberation Sans,sans-serif" font-weight="bold" font-size="19" fill="#2a9ae8" stroke="#1668c0" stroke-width=".6">e</text><path d="M2.4 16.4C0.8 12.4 6 5 15.6 2C11 5.2 6.4 10.4 5.4 14.4C4.8 16.8 3.2 17.6 2.4 16.4Z" fill="#f0c428"/><path d="M13.8 2.4C16.4 1.4 18 2 17.2 4.6" fill="none" stroke="#f0c428" stroke-width="1.3"/></svg>
  <svg class="abs" style="left:110px;top:6px" width="18" height="18" viewBox="0 0 18 18"><rect x="1" y="1" width="16" height="16" fill="#fbdfa6" stroke="#d79a3c" stroke-width="1.6"/><circle cx="9" cy="9" r="4.6" fill="#fde9bf" stroke="#c87a24" stroke-width="1.2"/><path d="M9 5.8V9.2H11.6" fill="none" stroke="#c87a24" stroke-width="1.1"/></svg>
  <svg class="abs" style="left:144px;top:6px" width="11" height="8" viewBox="0 0 11 8"><path d="M1.4 1L4.4 3.6L1.4 6.2M5.8 1L8.8 3.6L5.8 6.2" fill="none" stroke="#fff" stroke-width="1.5"/></svg>
  <!-- tray icons -->
  <svg class="abs" style="left:1298px;top:10px" width="10" height="10" viewBox="0 0 10 10"><path d="M7.4 1L2.2 4.8L7.4 8.8" fill="none" stroke="#fff" stroke-width="2"/></svg>
  <svg class="abs" style="left:1313px;top:5px" width="16" height="19" viewBox="0 0 16 19"><path d="M1 1.6C3.6 2 5.6 1.4 7.6 0.6C9.8 1.6 12 2 14.4 1.6V9C14.4 13.6 11 16.6 7.6 18C4.2 16.6 1 13.6 1 9Z" fill="#24409e" stroke="#1a2c70" stroke-width=".8"/><path d="M3.4 4C5 4 6.4 3.6 7.6 3C9 3.6 10.4 4 12 4V9C12 12.4 9.8 14.4 7.6 15.4C5.4 14.4 3.4 12.4 3.4 9Z" fill="#fff"/><text x="7.7" y="12.6" text-anchor="middle" font-family="Liberation Sans,sans-serif" font-weight="bold" font-size="10" fill="#e02020">V</text></svg>
  <svg class="abs" style="left:1341px;top:5px" width="17" height="17" viewBox="0 0 17 17"><rect x="7" y="2.4" width="8" height="12.4" rx="1" fill="#eef4ee" stroke="#fff" stroke-width="1"/><rect x="9" y="1" width="4" height="1.6" fill="#fff"/><rect x="8.2" y="4" width="5.6" height="9.6" fill="#8fd89a"/><path d="M2.4 1.4V4M5.6 1.4V4" stroke="#e8c060" stroke-width="1.3"/><path d="M1.2 4H6.8V7.4C6.8 8.8 5.6 9.6 4 9.6C2.4 9.6 1.2 8.8 1.2 7.4Z" fill="#fff"/><path d="M4 9.6V14.4" stroke="#fff" stroke-width="2.2"/></svg>
  <svg class="abs" style="left:1359px;top:5px" width="17" height="18" viewBox="0 0 17 18"><rect x="4.6" y="1.4" width="9" height="6.6" fill="#3a4048" stroke="#fff" stroke-width="1.3"/><rect x="1.2" y="6" width="9" height="6.8" fill="#3a4048" stroke="#fff" stroke-width="1.3"/><path d="M4 15.4H8M5.8 13V15.4" stroke="#fff" stroke-width="1.4"/><path d="M8.4 8.6L15 15.4M15 8.6L8.4 15.4" stroke="#e01818" stroke-width="2.2"/></svg>
  <svg class="abs" style="left:1377px;top:4px" width="14" height="18" viewBox="0 0 14 18"><path d="M1 6.4H3.2L7 2V16L3.2 11.8H1Z" fill="#fff"/><path d="M3.4 6.6V11.6" stroke="#888" stroke-width=".8"/><path d="M10 6C11.6 7.6 11.6 10.4 10 12" fill="none" stroke="#7ad07a" stroke-width="1.4"/></svg>
  <div class="abs tray" style="left:1270px;top:6px;letter-spacing:-0.6px">ES</div>
  <div class="abs tray" style="left:1399px;top:8px;font-size:12px;letter-spacing:-0.2px">14:04</div>
</div>
</body>
</html>
